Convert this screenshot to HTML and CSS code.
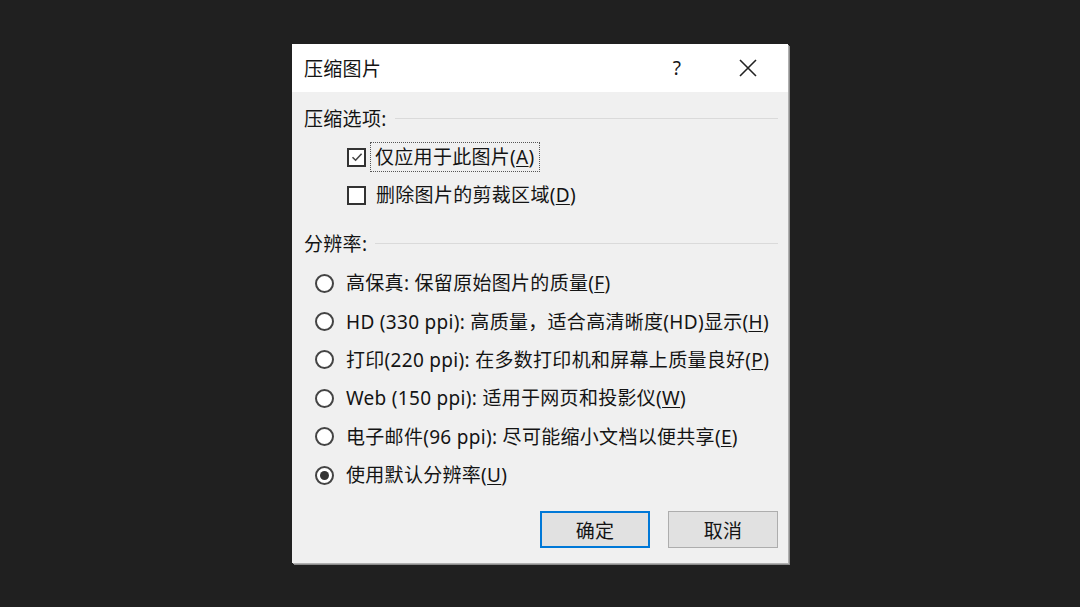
FILE: index.html
```html
<!DOCTYPE html>
<html lang="zh-CN">
<head>
<meta charset="utf-8">
<link rel="stylesheet" href="styles.css">
</head>
<body>
<div class="dialog">
  <div class="titlebar">
    <span class="title">压缩图片</span>
    <span class="help">?</span>
    <span class="close"><svg width="18" height="18" viewBox="0 0 18 18"><path d="M1 1L17 17M17 1L1 17" stroke="#222" stroke-width="1.6" fill="none"/></svg></span>
  </div>
  <div class="content">
    <div class="group-head"><span>压缩选项:</span><span class="rule"></span></div>
    <div class="check-row">
      <span class="checkbox checked"><svg width="14" height="14" viewBox="0 0 14 14"><path d="M2.5 7.2L5.6 10.2L11.6 3.8" stroke="#444" stroke-width="1.6" fill="none"/></svg></span>
      <span class="label focus">仅应用于此图片(<u>A</u>)</span>
    </div>
    <div class="check-row">
      <span class="checkbox"></span>
      <span class="label">删除图片的剪裁区域(<u>D</u>)</span>
    </div>
    <div class="group-head second"><span>分辨率:</span><span class="rule"></span></div>
    <div class="radio-row"><span class="radio"></span><span class="label">高保真: 保留原始图片的质量(<u>F</u>)</span></div>
    <div class="radio-row"><span class="radio"></span><span class="label">HD (330 ppi): 高质量，适合高清晰度(HD)显示(<u>H</u>)</span></div>
    <div class="radio-row"><span class="radio"></span><span class="label">打印(220 ppi): 在多数打印机和屏幕上质量良好(<u>P</u>)</span></div>
    <div class="radio-row"><span class="radio"></span><span class="label">Web (150 ppi): 适用于网页和投影仪(<u>W</u>)</span></div>
    <div class="radio-row"><span class="radio"></span><span class="label">电子邮件(96 ppi): 尽可能缩小文档以便共享(<u>E</u>)</span></div>
    <div class="radio-row"><span class="radio selected"></span><span class="label">使用默认分辨率(<u>U</u>)</span></div>
    <div class="buttons">
      <button class="btn primary">确定</button>
      <button class="btn">取消</button>
    </div>
  </div>
</div>
</body>
</html>
```

FILE: styles.css
```css
html, body {
  margin: 0;
  padding: 0;
  height: 100%;
}
body {
  background: #202020;
  display: flex;
  align-items: center;
  justify-content: center;
  font-family: "Noto Sans", "Noto Sans CJK SC", sans-serif;
  font-size: 19px;
  letter-spacing: 0.3px;
  color: #141414;
}
.dialog {
  width: 496px;
  height: 519px;
  background: #f0f0f0;
  box-shadow: 1px 1px 0 #b0b0b0, 2px 2px 0 #8c8c8c;
  display: flex;
  flex-direction: column;
}
.titlebar {
  height: 48px;
  background: #ffffff;
  display: flex;
  align-items: center;
  padding-left: 12px;
  flex-shrink: 0;
}
.title {
  flex: 1;
}
.help {
  width: 20px;
  text-align: center;
  margin-right: 52px;
}
.close {
  display: flex;
  margin-right: 31px;
}
.content {
  padding: 11px 10px 0 12px;
  display: flex;
  flex-direction: column;
}
.group-head {
  height: 30px;
  display: flex;
  align-items: center;
}
.group-head.second {
  margin-top: 14px;
}
.rule {
  flex: 1;
  height: 1px;
  background: #dadada;
  margin-left: 8px;
}
.check-row {
  height: 38px;
  display: flex;
  align-items: center;
  padding-left: 43px;
}
.group-head + .check-row {
  margin-top: 5px;
}
.checkbox {
  width: 15px;
  height: 15px;
  border: 2px solid #333;
  background: #fff;
  display: flex;
  align-items: center;
  justify-content: center;
  margin-right: 10px;
  flex-shrink: 0;
}
.label {
  white-space: nowrap;
  line-height: 26px;
}
.label.focus {
  outline: 1px dotted #555;
  outline-offset: 1px;
  padding: 0 3px;
  margin-left: -4px;
}
u {
  text-underline-offset: 2px;
}
.group-head.second + .radio-row {
  margin-top: 6px;
}
.radio-row {
  height: 38.4px;
  display: flex;
  align-items: center;
  padding-left: 11px;
}
.radio {
  width: 15px;
  height: 15px;
  border: 2px solid #444;
  border-radius: 50%;
  background: #fff;
  margin-right: 12px;
  flex-shrink: 0;
  display: flex;
  align-items: center;
  justify-content: center;
}
.radio.selected::after {
  content: "";
  width: 9px;
  height: 9px;
  border-radius: 50%;
  background: #333;
}
.buttons {
  display: flex;
  justify-content: flex-end;
  gap: 18px;
  margin-top: 17px;
  padding-right: 0;
}
.btn {
  width: 110px;
  height: 37px;
  background: #e1e1e1;
  border: 1px solid #adadad;
  font-family: inherit;
  font-size: 19px;
  letter-spacing: 0.3px;
  color: #141414;
  padding: 0;
}
.btn.primary {
  border: 2px solid #0078d7;
}
```
